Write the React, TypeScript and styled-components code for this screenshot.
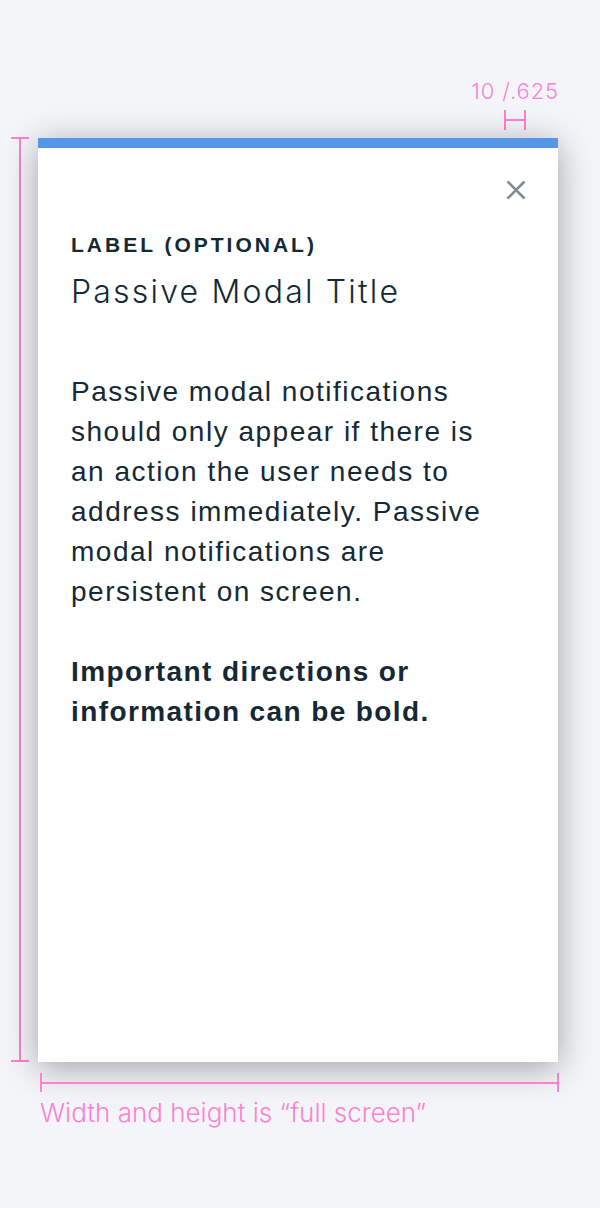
import React from "react";
import styled, { createGlobalStyle } from "styled-components";

const PINK = "#ff80d2";
const INK = "#152935";

const GlobalStyle = createGlobalStyle`
  html, body { margin: 0; padding: 0; background: #f4f5f9; }
  body { font-family: "Liberation Sans", Arial, sans-serif; }
`;

const Page = styled.div`
  width: 600px;
  height: 1208px;
  display: flex;
  flex-direction: column;
  background: #f4f5f9;
  overflow: hidden;
`;

const Header = styled.div`
  height: 138px;
  box-sizing: border-box;
  padding: 78px 41px 0 0;
  display: flex;
  justify-content: flex-end;
`;

const SpacingNote = styled.div`
  display: flex;
  flex-direction: column;
  align-items: center;
`;

const NoteText = styled.span`
  font-family: Inter, "Liberation Sans", sans-serif;
  font-weight: 300;
  font-size: 22px;
  line-height: 26px;
  letter-spacing: 0.9px;
  color: ${PINK};
  white-space: nowrap;
`;

const HMarker = styled.div`
  margin-top: 6px;
  width: 22px;
  height: 20px;
  box-sizing: border-box;
  border-left: 2px solid ${PINK};
  border-right: 2px solid ${PINK};
  display: flex;
  align-items: center;
  &::before {
    content: "";
    flex: 1;
    height: 2px;
    background: ${PINK};
  }
`;

const Middle = styled.div`
  display: flex;
  height: 924px;
`;

const VRuler = styled.div`
  width: 38px;
  box-sizing: border-box;
  padding-left: 11px;
  display: flex;
`;

const VRulerInner = styled.div`
  width: 18px;
  display: flex;
  flex-direction: column;
  align-items: center;
  margin-top: -1px;
`;

const HCap = styled.div`
  width: 18px;
  height: 2px;
  background: ${PINK};
  flex: none;
`;

const VLine = styled.div`
  flex: 1;
  width: 2px;
  background: ${PINK};
`;

const Modal = styled.div`
  width: 520px;
  height: 924px;
  box-sizing: border-box;
  background: #fff;
  border-top: 10px solid #5596e6;
  box-shadow: 0 6px 32px rgba(0, 0, 0, 0.34);
  padding: 32px 32px 32px 33px;
  display: flex;
  flex-direction: column;
  color: ${INK};
`;

const CloseRow = styled.div`
  display: flex;
  justify-content: flex-end;
  height: 20px;
`;

const CloseButton = styled.button`
  width: 20px;
  height: 20px;
  padding: 0;
  border: 0;
  background: transparent;
  display: flex;
  cursor: pointer;
`;

const Label = styled.div`
  margin-top: 33px;
  font-size: 21px;
  line-height: 24px;
  font-weight: 700;
  letter-spacing: 3px;
  text-transform: uppercase;
`;

const Title = styled.h2`
  margin: 15px 0 0;
  font-family: Inter, "Liberation Sans", sans-serif;
  font-size: 32px;
  line-height: 40px;
  font-weight: 300;
  letter-spacing: 2.2px;
`;

const Paragraph = styled.p<{ $bold?: boolean; $gap: number }>`
  margin: ${(p) => p.$gap}px 0 0;
  max-width: 428px;
  font-size: 28px;
  line-height: 40px;
  font-weight: ${(p) => (p.$bold ? 700 : 400)};
  letter-spacing: ${(p) => (p.$bold ? 1.4 : 1.5)}px;
`;

const HRuler = styled.div`
  margin: 11px 0 0 40px;
  width: 519px;
  height: 19px;
  display: flex;
  align-items: center;
`;

const VCap = styled.div`
  width: 2px;
  height: 19px;
  background: ${PINK};
  flex: none;
`;

const HLine = styled.div`
  flex: 1;
  height: 2px;
  background: ${PINK};
`;

const Caption = styled.div`
  margin: 4px 0 0 40px;
  font-family: Inter, "Liberation Sans", sans-serif;
  font-weight: 300;
  font-size: 26px;
  line-height: 34px;
  color: ${PINK};
`;

export default function App() {
  return (
    <Page>
      <GlobalStyle />
      <Header>
        <SpacingNote>
          <NoteText>10 /.625</NoteText>
          <HMarker />
        </SpacingNote>
      </Header>
      <Middle>
        <VRuler>
          <VRulerInner>
            <HCap />
            <VLine />
            <HCap />
          </VRulerInner>
        </VRuler>
        <Modal>
          <CloseRow>
            <CloseButton aria-label="Close">
              <svg width="20" height="20" viewBox="0 0 20 20">
                <path
                  d="M1.5 1.5 L18.5 18.5 M18.5 1.5 L1.5 18.5"
                  stroke="#7d8d98"
                  strokeWidth="2.6"
                  fill="none"
                />
              </svg>
            </CloseButton>
          </CloseRow>
          <Label>Label (optional)</Label>
          <Title>Passive Modal Title</Title>
          <Paragraph $gap={60}>
            Passive modal notifications should only appear if there is an
            action the user needs to address immediately. Passive modal
            notifications are persistent on screen.
          </Paragraph>
          <Paragraph $gap={40} $bold>
            Important directions or information can be bold.
          </Paragraph>
        </Modal>
      </Middle>
      <HRuler>
        <VCap />
        <HLine />
        <VCap />
      </HRuler>
      <Caption>Width and height is “full screen”</Caption>
    </Page>
  );
}
